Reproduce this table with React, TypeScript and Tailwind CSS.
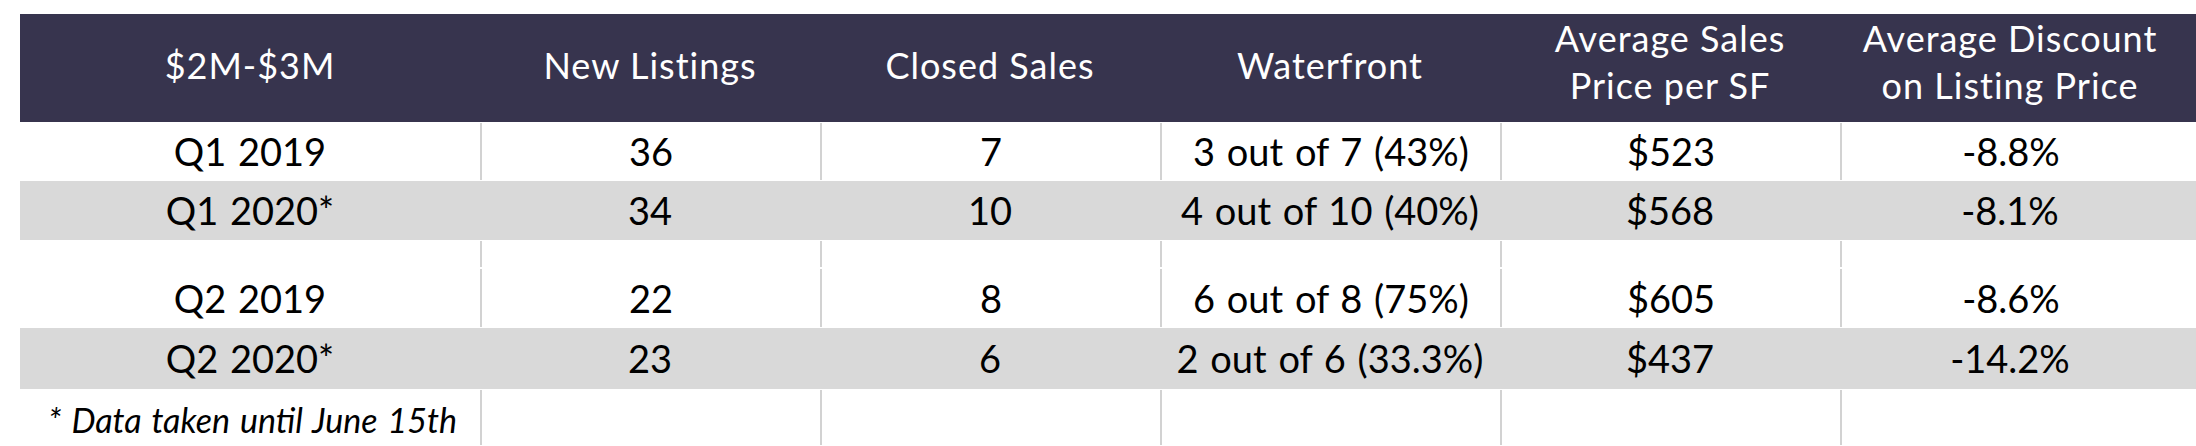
const COLS = 'grid grid-cols-[460px_repeat(5,340px)]'

type Row = { label: string; cells: string[]; grey?: boolean; h: string }

const rows: Row[] = [
  { label: 'Q1 2019', cells: ['36', '7', '3 out of 7 (43%)', '$523', '-8.8%'], h: 'h-[59px]' },
  { label: 'Q1 2020*', cells: ['34', '10', '4 out of 10 (40%)', '$568', '-8.1%'], grey: true, h: 'h-[59px]' },
  { label: '', cells: ['', '', '', '', ''], h: 'h-[28px]' },
  { label: 'Q2 2019', cells: ['22', '8', '6 out of 8 (75%)', '$605', '-8.6%'], h: 'h-[60px]' },
  { label: 'Q2 2020*', cells: ['23', '6', '2 out of 6 (33.3%)', '$437', '-14.2%'], grey: true, h: 'h-[61px]' },
]

const headers = [
  ['$2M-$3M'],
  ['New Listings'],
  ['Closed Sales'],
  ['Waterfront'],
  ['Average Sales', 'Price per SF'],
  ['Average Discount', 'on Listing Price'],
]

function BodyRow({ row }: { row: Row }) {
  const values = [row.label, ...row.cells]
  return (
    <div className={`${COLS} ${row.h} ${row.grey ? 'bg-[#d9d9d9]' : 'bg-white py-[1px]'}`}>
      {values.map((v, i) => (
        <div
          key={i}
          className={`flex items-center justify-center whitespace-nowrap ${
            !row.grey && i > 0 ? 'border-l-2 border-[#d2d2d2]' : ''
          }`}
        >
          {v}
        </div>
      ))}
    </div>
  )
}

export default function App() {
  return (
    <div className="h-[446px] w-[2196px] overflow-hidden bg-white pl-[20px] pt-[14px] font-['Lato',sans-serif] text-[38px] text-black [word-spacing:2px]">
      <div className={`${COLS} h-[108px] bg-[#37344e] text-[36px] leading-[47px] tracking-[1px] text-white [word-spacing:0px]`}>
        {headers.map((lines, i) => (
          <div
            key={i}
            className={`flex flex-col items-center justify-center whitespace-nowrap ${
              lines.length > 1 ? 'pb-[12px]' : 'pb-[6px]'
            }`}
          >
            {lines.map((l) => (
              <span key={l}>{l}</span>
            ))}
          </div>
        ))}
      </div>
      {rows.map((r, i) => (
        <BodyRow key={i} row={r} />
      ))}
      <div className={`${COLS} h-[57px] py-[1px]`}>
        <div className="flex items-center whitespace-nowrap pl-[28px] pt-[4px] text-[34px] italic">
          * Data taken until June 15th
        </div>
        {[0, 1, 2, 3, 4].map((i) => (
          <div key={i} className="border-l-2 border-[#d2d2d2]" />
        ))}
      </div>
    </div>
  )
}
